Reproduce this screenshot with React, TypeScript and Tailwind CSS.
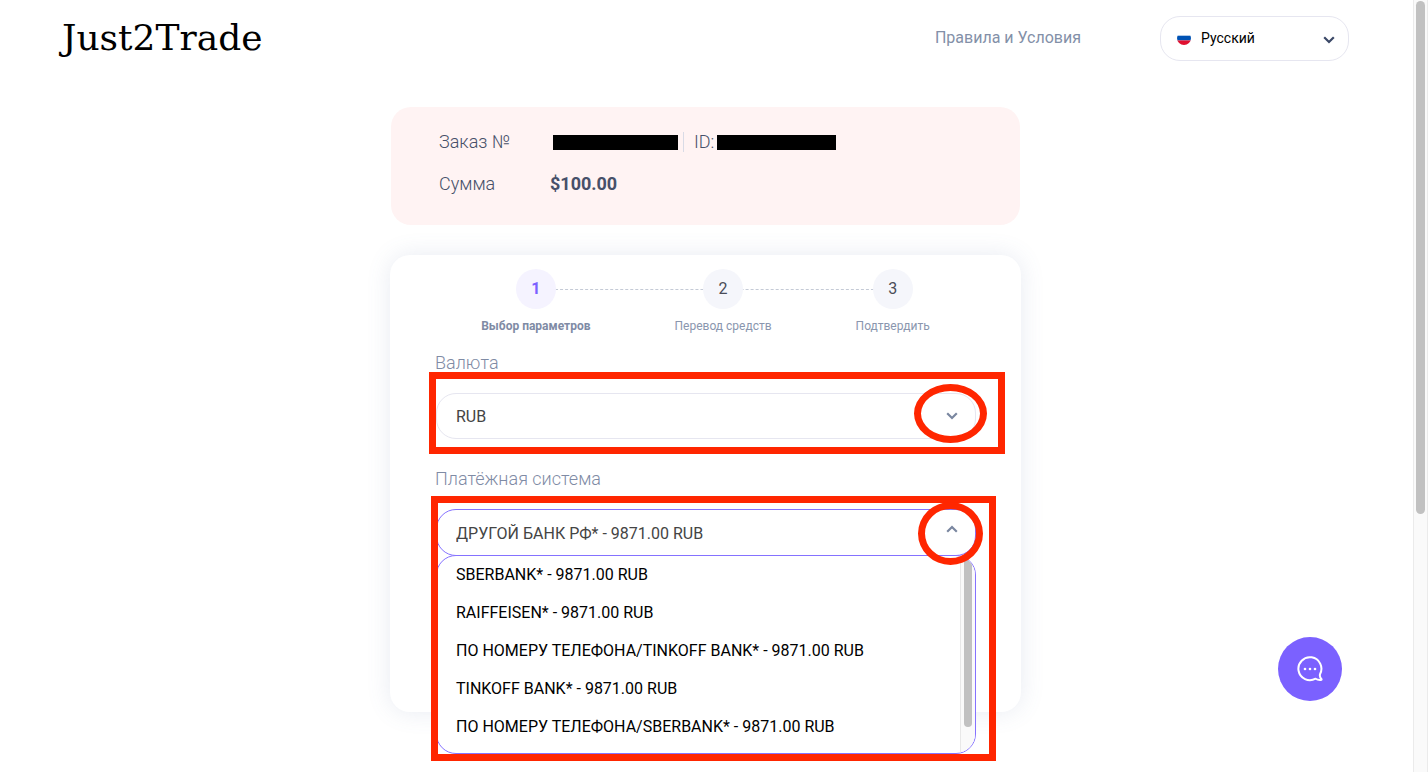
import React from "react";

const paymentOptions = [
  "SBERBANK* - 9871.00 RUB",
  "RAIFFEISEN* - 9871.00 RUB",
  "ПО НОМЕРУ ТЕЛЕФОНА/TINKOFF BANK* - 9871.00 RUB",
  "TINKOFF BANK* - 9871.00 RUB",
  "ПО НОМЕРУ ТЕЛЕФОНА/SBERBANK* - 9871.00 RUB",
];

const steps = [
  { number: 1, label: "Выбор параметров", active: true },
  { number: 2, label: "Перевод средств", active: false },
  { number: 3, label: "Подтвердить", active: false },
];

function Chevron({ className }: { className: string }) {
  return (
    <svg viewBox="0 0 12 8" fill="none" aria-hidden="true" className={className}>
      <path d="M1.2 1.2 6 6l4.800-4.800" stroke="currentColor" strokeWidth="2.200" />
    </svg>
  );
}

function RussianFlag() {
  return (
    <svg viewBox="0 0 14 14" aria-hidden="true" className="h-3.5 w-3.5">
      <clipPath id="flag-circle">
        <circle cx="7" cy="7" r="7" />
      </clipPath>
      <g clipPath="url(#flag-circle)">
        <rect width="14" height="14" fill="#fff" />
        <rect y="4.700" width="14" height="4.700" fill="#0052b4" />
        <rect y="9.400" width="14" height="4.600" fill="#e0102f" />
      </g>
    </svg>
  );
}

function Header() {
  return (
    <header className="flex h-[76px] items-center justify-between px-[62px]">
      <a href="#" className="font-['Roboto_Slab','DejaVu_Serif',serif] text-4xl leading-10 text-black">
        Just2Trade
      </a>
      <div className="flex items-center gap-[79px]">
        <a href="#" className="text-base text-[#8390a8]">
          Правила и Условия
        </a>
        <div className="relative">
          <select
            aria-label="Язык"
            className="block h-[45px] w-[189px] appearance-none rounded-[20px] border border-[#e6e6f0] bg-white pl-10 text-sm text-black"
          >
            <option>Русский</option>
          </select>
          <span className="pointer-events-none absolute inset-y-0 left-[17px] flex items-center">
            <RussianFlag />
          </span>
          <span className="pointer-events-none absolute inset-y-0 right-3.5 flex items-center pt-1 text-[#3b4867]">
            <Chevron className="h-2 w-3" />
          </span>
        </div>
      </div>
    </header>
  );
}

function OrderSummary() {
  return (
    <dl className="mx-px flex flex-col gap-[18px] rounded-[20px] bg-[#fff3f3] px-12 pb-[29px] pt-[23px] text-lg leading-6 font-light text-[#475069]">
      <div className="flex">
        <dt className="w-[111px]">Заказ №</dt>
        <dd className="flex items-center">
          <span className="ml-[3px] h-[15px] w-[125px] bg-black" />
          <span className="ml-[5px] h-5 w-px bg-[#d9dbe6]" />
          <span className="ml-2.5">ID:</span>
          <span className="ml-[3px] h-[15px] w-[119px] bg-black" />
        </dd>
      </div>
      <div className="flex">
        <dt className="w-[111px]">Сумма</dt>
        <dd className="font-bold">$100.00</dd>
      </div>
    </dl>
  );
}

function Steps() {
  return (
    <div className="flex justify-center">
      <ol className="relative flex gap-[84px]">
        <li aria-hidden="true" className="absolute left-[54px] right-9 top-5 border-t border-dashed border-[#c4cad6]" />
        {steps.map((step) => (
          <li key={step.number} className="relative flex flex-col items-center gap-[9px]">
            <span
              className={
                step.active
                  ? "flex h-10 w-10 items-center justify-center rounded-full bg-[#f5f3ff] text-base font-bold text-[#7b61ff]"
                  : "flex h-10 w-10 items-center justify-center rounded-full bg-[#f5f6fb] text-base text-[#4a4d58]"
              }
            >
              {step.number}
            </span>
            <span
              className={
                step.active
                  ? "text-xs leading-4 font-bold text-[#7f8ba5]"
                  : "text-xs leading-4 text-[#8a96ae]"
              }
            >
              {step.label}
            </span>
          </li>
        ))}
      </ol>
    </div>
  );
}

function CurrencyField() {
  return (
    <div className="mt-[17px]">
      <label htmlFor="currency" className="block text-lg leading-6 font-light text-[#7f8ba5]">
        Валюта
      </label>
      <div className="relative ml-px mt-[18px]">
        <select
          id="currency"
          className="block h-[46px] w-full appearance-none rounded-[20px] border border-[#e6e6f0] bg-white px-[19px] pt-0.5 text-base text-[#444]"
        >
          <option>RUB</option>
        </select>
        <span className="pointer-events-none absolute inset-y-0 right-[18px] flex items-center text-[#7a87a0]">
          <Chevron className="h-2 w-3" />
        </span>
        <span className="pointer-events-none absolute -bottom-[15px] -left-[7px] -right-[29px] -top-[21px] border-[7px] border-[#ff2600]" />
        <span className="pointer-events-none absolute -right-[11px] -top-[9px] h-[59px] w-[73px] rounded-[50%] border-[7px] border-[#ff2600]" />
      </div>
    </div>
  );
}

function PaymentField() {
  return (
    <div className="mt-7">
      <label htmlFor="payment" className="block text-lg leading-6 font-light text-[#7f8ba5]">
        Платёжная система
      </label>
      <div className="relative ml-px mt-[18px]">
        <select
          id="payment"
          className="block h-[47px] w-full appearance-none rounded-[20px] border border-[#8572ff] bg-white px-[19px] pt-0.5 text-base text-[#444]"
        >
          <option>ДРУГОЙ БАНК РФ* - 9871.00 RUB</option>
        </select>
        <span className="pointer-events-none absolute inset-y-0 right-[18px] flex items-center pb-2 text-[#7a87a0]">
          <Chevron className="h-2 w-3 rotate-180" />
        </span>
        <div className="absolute inset-x-0 top-[46px] flex h-[199px] overflow-hidden rounded-[20px] border border-[#8572ff] bg-white">
          <ul role="listbox" aria-label="Платёжная система" className="grow">
            {paymentOptions.map((option) => (
              <li
                key={option}
                role="option"
                aria-selected="false"
                className="flex h-[38px] items-center pl-[19px] text-base text-black"
              >
                {option}
              </li>
            ))}
          </ul>
          <div className="flex w-[15px] justify-center border-l border-[#e8e8e8] bg-[#fafafa]">
            <div className="h-[171px] w-2 rounded-full bg-[#c1c1c1]" />
          </div>
        </div>
        <span className="pointer-events-none absolute -left-[5px] -right-5 -top-[13px] h-[265px] border-[7px] border-[#ff2600]" />
        <span className="pointer-events-none absolute -right-[7px] -top-[7px] h-[63px] w-[65px] rounded-[50%] border-[7px] border-[#ff2600]" />
      </div>
    </div>
  );
}

function ChatButton() {
  return (
    <button
      type="button"
      aria-label="Чат"
      className="fixed bottom-[71px] right-[86px] flex h-16 w-16 items-center justify-center rounded-full bg-[#7b61ff] text-white"
    >
      <svg viewBox="0 0 26 26" fill="none" aria-hidden="true" className="h-[26px] w-[26px]">
        <path
          d="M23 18.200A11.500 11.500 0 1 0 18.600 22.700c1.800 1.300 3.500 1.500 5.600 1.200.4-.1.500-.6.200-.9-1.400-1.400-1.800-3-1.400-4.800Z"
          stroke="currentColor"
          strokeWidth="2"
          strokeLinejoin="round"
        />
        <circle cx="8" cy="13" r="1.300" fill="currentColor" />
        <circle cx="13" cy="13" r="1.300" fill="currentColor" />
        <circle cx="18" cy="13" r="1.300" fill="currentColor" />
      </svg>
    </button>
  );
}

export default function App() {
  return (
    <div className="flex min-h-screen bg-white font-['Roboto',sans-serif]">
      <div className="min-w-0 grow pr-0.5">
        <Header />
        <main className="mx-auto mt-[31px] w-full max-w-[631px]">
          <OrderSummary />
          <section className="mt-[30px] rounded-[20px] bg-white px-[45px] pb-[156px] pt-3.5 shadow-[0_0_24px_rgba(90,110,160,0.14)]">
            <Steps />
            <CurrencyField />
            <PaymentField />
          </section>
        </main>
      </div>
      <div className="flex w-[15px] shrink-0 justify-center border-x border-[#ebebeb] bg-[#fafafa] pt-px">
        <div className="h-[513px] w-[9px] rounded-full bg-[#c1c1c1]" />
      </div>
      <ChatButton />
    </div>
  );
}
